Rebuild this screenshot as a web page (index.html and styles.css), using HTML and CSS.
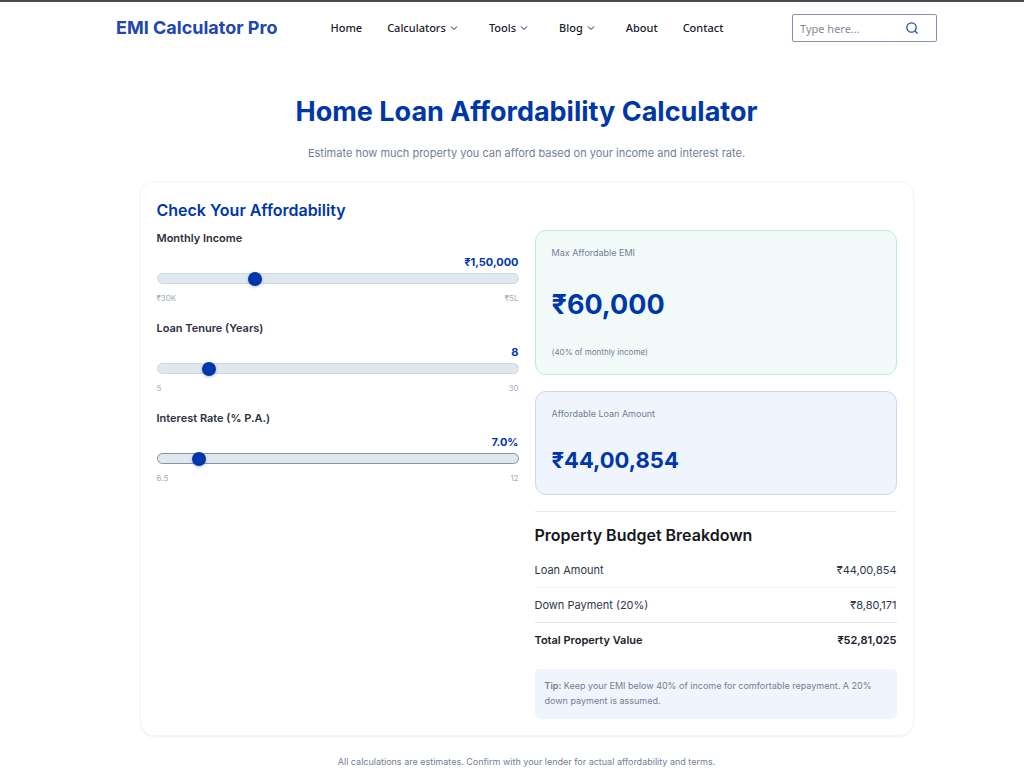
FILE: index.html
```html
<!DOCTYPE html>
<html lang="en">
<head>
<meta charset="utf-8">
<meta name="viewport" content="width=device-width, initial-scale=1">
<title>Home Loan Affordability Calculator</title>
<link rel="stylesheet" href="styles.css">
</head>
<body>
<header class="header">
  <a class="brand" href="#">EMI Calculator Pro</a>
  <nav class="nav" aria-label="Main">
    <a href="#">Home</a>
    <a href="#">Calculators <svg class="chevron" viewBox="0 0 8 8" aria-hidden="true"><path d="M1 2.5 4 5.5 7 2.5"/></svg></a>
    <a href="#">Tools <svg class="chevron" viewBox="0 0 8 8" aria-hidden="true"><path d="M1 2.5 4 5.5 7 2.5"/></svg></a>
    <a href="#">Blog <svg class="chevron" viewBox="0 0 8 8" aria-hidden="true"><path d="M1 2.5 4 5.5 7 2.5"/></svg></a>
    <a href="#">About</a>
    <a href="#">Contact</a>
  </nav>
  <form class="search" role="search">
    <input class="search-input" type="search" placeholder="Type here..." aria-label="Search">
    <button class="search-button" type="button" aria-label="Search">
      <svg class="search-icon" viewBox="0 0 12 12" aria-hidden="true"><circle cx="5.5" cy="5.5" r="4.7"/><path d="M9 9l2.5 2.5"/></svg>
    </button>
  </form>
</header>
<main class="main">
  <h1 class="title">Home Loan Affordability Calculator</h1>
  <p class="subtitle">Estimate how much property you can afford based on your income and interest rate.</p>
  <section class="card">
    <h2 class="card-title">Check Your Affordability</h2>
    <div class="columns">
      <form class="fields">
        <div class="field">
          <label class="label" for="income">Monthly Income</label>
          <output class="value" for="income">₹1,50,000</output>
          <input class="range" id="income" type="range" min="30000" max="500000" step="1000" value="150000">
          <div class="limits"><span>₹30K</span><span>₹5L</span></div>
        </div>
        <div class="field">
          <label class="label" for="tenure">Loan Tenure (Years)</label>
          <output class="value" for="tenure">8</output>
          <input class="range" id="tenure" type="range" min="5" max="30" value="8">
          <div class="limits"><span>5</span><span>30</span></div>
        </div>
        <div class="field">
          <label class="label" for="rate">Interest Rate (% P.A.)</label>
          <output class="value" for="rate">7.0%</output>
          <input class="range range-active" id="rate" type="range" min="6.5" max="12" step="0.1" value="7">
          <div class="limits"><span>6.5</span><span>12</span></div>
        </div>
      </form>
      <div class="results">
        <div class="result result-emi">
          <p class="result-label">Max Affordable EMI</p>
          <p class="amount amount-large">₹60,000</p>
          <p class="result-note">(40% of monthly income)</p>
        </div>
        <div class="result result-loan">
          <p class="result-label">Affordable Loan Amount</p>
          <p class="amount">₹44,00,854</p>
        </div>
        <section class="breakdown">
          <h3 class="breakdown-title">Property Budget Breakdown</h3>
          <table class="budget">
            <tbody>
              <tr><th scope="row">Loan Amount</th><td>₹44,00,854</td></tr>
              <tr class="before-total"><th scope="row">Down Payment (20%)</th><td>₹8,80,171</td></tr>
              <tr class="total"><th scope="row">Total Property Value</th><td>₹52,81,025</td></tr>
            </tbody>
          </table>
          <p class="tip"><strong>Tip:</strong> Keep your EMI below 40% of income for comfortable repayment. A 20% down payment is assumed.</p>
        </section>
      </div>
    </div>
  </section>
  <p class="disclaimer">All calculations are estimates. Confirm with your lender for actual affordability and terms.</p>
</main>
</body>
</html>
```
FILE: styles.css
```css
* {
  box-sizing: border-box;
}

body {
  margin: 0;
  padding: 0 0 0 29px;
  border-top: 2px solid #4a4a4a;
  background: #fff;
  color: #2d3748;
  font-family: Inter, "Liberation Sans", sans-serif;
  font-size: 11px;
}

h1, h2, h3, p {
  margin: 0;
}

.header {
  display: flex;
  align-items: center;
  max-width: 821px;
  margin: 0 auto;
  padding: 12px 0;
}

.brand {
  margin-right: 53px;
  color: #2146b0;
  font-size: 18px;
  font-weight: 700;
  line-height: 28px;
  text-decoration: none;
}

.nav {
  display: flex;
  gap: 25px;
  font-family: "Noto Sans", "Open Sans", sans-serif;
  font-size: 11px;
  font-weight: 500;
  line-height: 28px;
}

.nav a {
  display: flex;
  align-items: center;
  gap: 4px;
  color: #1a202c;
  text-decoration: none;
}

.chevron {
  width: 8px;
  height: 8px;
  margin-right: 6px;
  fill: none;
  stroke: #1a202c;
  stroke-width: 1;
}

.search {
  display: flex;
  align-items: center;
  width: 145px;
  height: 28px;
  margin-left: auto;
  border: 1px solid #8492ad;
  border-radius: 2px;
}

.search-input {
  flex: 1;
  min-width: 0;
  padding: 0 7px;
  border: 0;
  outline: 0;
  background: none;
  font-family: "Noto Sans", "Open Sans", sans-serif;
  font-size: 11px;
}

.search-input::placeholder {
  color: #848b98;
}

.search-button {
  display: flex;
  justify-content: center;
  width: 48px;
  padding: 0;
  border: 0;
  background: none;
}

.search-icon {
  width: 12px;
  height: 12px;
  fill: none;
  stroke: #1f4bb0;
  stroke-width: 1.2;
}

.main {
  max-width: 774px;
  margin: 0 auto;
  padding-top: 38px;
}

.title {
  color: #0037a8;
  font-size: 27px;
  font-weight: 700;
  line-height: 40px;
  text-align: center;
}

.subtitle {
  margin-top: 12px;
  color: #718096;
  font-size: 11px;
  line-height: 18px;
  text-align: center;
}

.card {
  margin-top: 19px;
  padding: 16px;
  border: 1px solid #f3f5f7;
  border-radius: 14px;
  box-shadow: 0 1px 2px #00000010;
}

.card-title {
  color: #0037a8;
  font-size: 16px;
  font-weight: 600;
  line-height: 24px;
}

.columns {
  display: grid;
  grid-template-columns: 1fr 1fr;
  gap: 16px;
  margin-top: 8px;
}

.fields {
  display: flex;
  flex-direction: column;
  gap: 16px;
}

.field {
  display: flex;
  flex-direction: column;
}

.label {
  color: #2d3040;
  font-size: 11px;
  font-weight: 600;
  line-height: 16px;
}

.value {
  margin-top: 7px;
  color: #0037a8;
  font-size: 11px;
  font-weight: 700;
  line-height: 18px;
  text-align: right;
}

.range {
  appearance: none;
  width: 100%;
  height: 11px;
  margin: 2px 0 8px;
  padding: 0 4px;
  border: 1px solid #cfd8e5;
  border-radius: 6px;
  outline: 0;
  background: #e1e7ef;
}

.range-active {
  border-color: #8792a6;
}

.range::-webkit-slider-thumb {
  appearance: none;
  width: 14px;
  height: 14px;
  border-radius: 50%;
  background: #0037a8;
  box-shadow: 0 1px 3px #0037a850;
}

.limits {
  display: flex;
  justify-content: space-between;
  color: #a0aec0;
  font-size: 8px;
  line-height: 12px;
}

.results {
  display: flex;
  flex-direction: column;
  gap: 16px;
}

.result {
  padding: 15px 16px;
  border: 1px solid;
  border-radius: 11px;
  color: #718096;
}

.result-emi {
  border-color: #bcebda;
  background: #f1faf8;
}

.result-loan {
  border-color: #cbd9ee;
  background: #f0f4fc;
}

.result-label {
  font-size: 9px;
  line-height: 14px;
}

.amount {
  margin: 21px 0 1px;
  color: #0037a8;
  font-size: 22px;
  font-weight: 700;
  line-height: 36px;
}

.amount-large {
  margin: 22px 0 18px;
  font-size: 27px;
  line-height: 46px;
}

.result-note {
  font-size: 8px;
  line-height: 13px;
}

.breakdown {
  padding-top: 12px;
  border-top: 1px solid #e5e9f0;
}

.breakdown-title {
  color: #16181d;
  font-size: 16px;
  font-weight: 600;
  line-height: 22px;
}

.budget {
  width: 100%;
  margin-top: 7px;
  border-collapse: collapse;
  font-size: 11px;
  line-height: 18px;
}

.budget th,
.budget td {
  padding: 8px 0;
  border-bottom: 1px solid #eff6f8;
  font-weight: 400;
  text-align: left;
}

.budget td {
  text-align: right;
}

.budget .before-total th,
.budget .before-total td {
  border-bottom-color: #dbe4ef;
}

.budget .total th,
.budget .total td {
  border-bottom: 0;
  color: #1a202c;
  font-weight: 600;
}

.tip {
  margin-top: 12px;
  padding: 9px 10px 11px;
  border-radius: 5px;
  background: #f0f4fc;
  color: #718096;
  font-size: 9px;
  line-height: 15px;
}

.tip strong {
  font-weight: 600;
}

.disclaimer {
  margin-top: 18px;
  color: #718096;
  font-size: 9px;
  line-height: 16px;
  text-align: center;
}
```
